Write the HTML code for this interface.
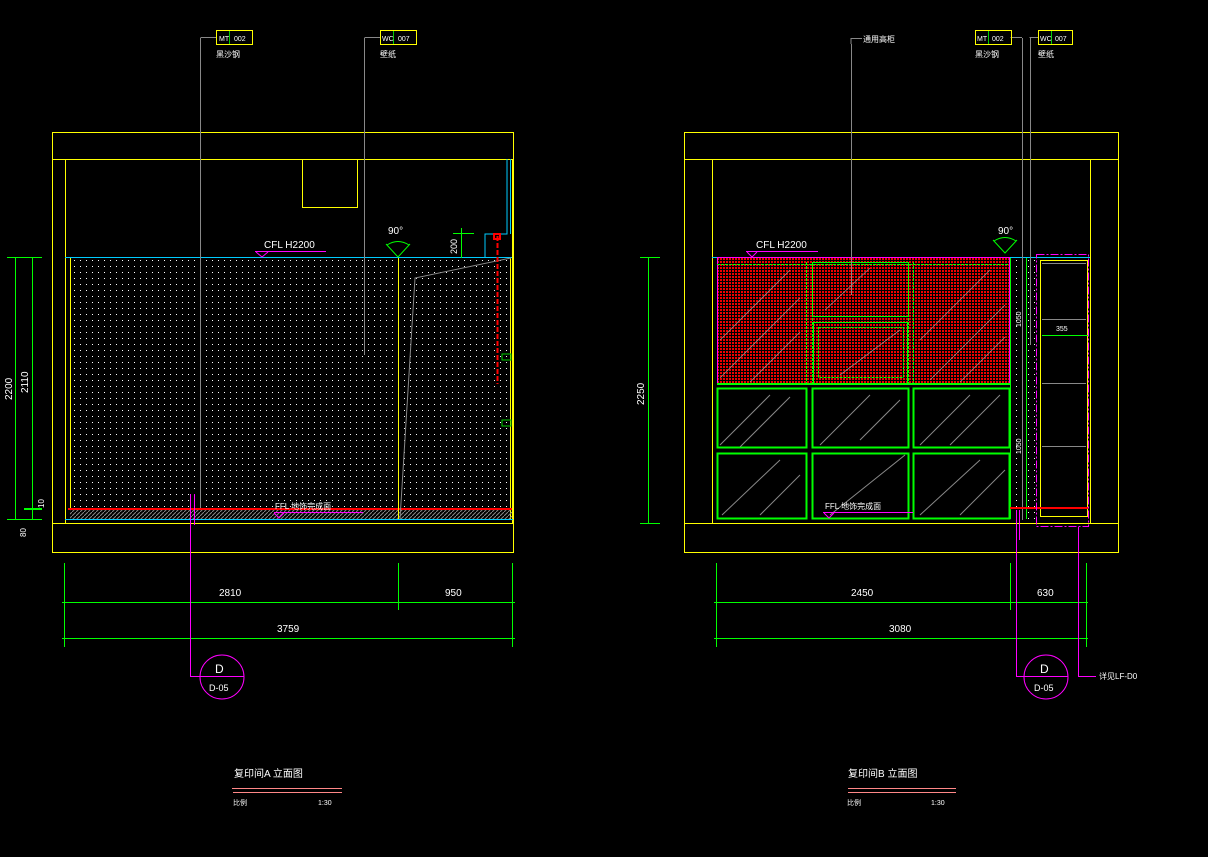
<!DOCTYPE html>
<html><head><meta charset="utf-8"><style>
html,body{margin:0;padding:0;background:#000;width:1208px;height:857px;overflow:hidden}
svg{display:block}
text{font-family:"Liberation Sans","Noto Sans CJK SC",sans-serif;fill:#fff}
</style></head><body>
<svg width="1208" height="857" viewBox="0 0 1208 857" xmlns="http://www.w3.org/2000/svg">
<defs>
<pattern id="dw" width="6" height="6" patternUnits="userSpaceOnUse"><rect x="2" y="2" width="1" height="1" fill="#fff"/></pattern>
<pattern id="dr" width="3" height="3" patternUnits="userSpaceOnUse"><rect width="3" height="3" fill="#000"/><rect x="0" y="0" width="2" height="2" fill="#e00"/></pattern>
<pattern id="hatch" width="4" height="4" patternUnits="userSpaceOnUse"><path d="M0 4L4 0" stroke="#888" stroke-width="1"/></pattern>
</defs>
<rect width="1208" height="857" fill="#000"/>

<!-- ========== LEFT ========== -->
<g fill="none" stroke-width="1">
<rect x="52.5" y="132.5" width="461" height="420" stroke="#ff0"/>
<line x1="52" y1="159.5" x2="513" y2="159.5" stroke="#ff0"/>
<line x1="52" y1="523.5" x2="513" y2="523.5" stroke="#ff0"/>
<line x1="65.5" y1="159" x2="65.5" y2="523" stroke="#ff0"/>
<line x1="512.5" y1="159" x2="512.5" y2="523" stroke="#ff0"/>
<rect x="70" y="258" width="442" height="251" fill="url(#dw)" stroke="none"/>
<line x1="65" y1="257.5" x2="512" y2="257.5" stroke="#0cf"/>
<line x1="65" y1="519.5" x2="513" y2="519.5" stroke="#0cf"/>
<line x1="70.5" y1="258" x2="70.5" y2="509" stroke="#ff0"/>
<line x1="510.5" y1="258" x2="510.5" y2="519" stroke="#ff0"/>
<rect x="70" y="510" width="442" height="9" fill="url(#hatch)" stroke="none"/>
<line x1="68" y1="509" x2="512" y2="509" stroke="#f00" stroke-width="2"/>
<rect x="302.5" y="159.5" width="55" height="48" stroke="#ff0"/>
<polyline points="485,257 485,234 507,234 507,159" stroke="#0cf"/>
<line x1="510.5" y1="159" x2="510.5" y2="234" stroke="#0cf"/>
<line x1="200.5" y1="38" x2="200.5" y2="508" stroke="#888"/>
<line x1="364.5" y1="38" x2="364.5" y2="355" stroke="#888"/>
<line x1="398.5" y1="258" x2="398.5" y2="519" stroke="#ff0"/>
<polyline points="511,258 415,278 400,519" stroke="#888"/>
<line x1="497.5" y1="236" x2="497.5" y2="384" stroke="#f00" stroke-width="2" stroke-dasharray="5,2"/>
<rect x="494" y="234" width="6" height="5" stroke="#f00" stroke-width="2"/>
<rect x="502" y="354" width="9" height="6" stroke="#0c0"/>
<rect x="502" y="420" width="9" height="6" stroke="#0c0"/>
<line x1="255" y1="251.5" x2="326" y2="251.5" stroke="#f0f"/>
<polyline points="256,252 262,257 268,252" stroke="#f0f"/>
<line x1="274" y1="512.5" x2="363" y2="512.5" stroke="#f0f"/>
<polyline points="274,513 279,518 284,513" stroke="#f0f"/>
<path d="M387 245 Q398 238 409 245" stroke="#0f0"/>
<polyline points="386,244 398,257 410,244" stroke="#0f0"/>
<line x1="461.5" y1="228" x2="461.5" y2="258" stroke="#0f0"/>
<line x1="453" y1="233.5" x2="474" y2="233.5" stroke="#0f0"/>
<line x1="15.5" y1="257" x2="15.5" y2="520" stroke="#0f0"/>
<line x1="32.5" y1="257" x2="32.5" y2="520" stroke="#0f0"/>
<line x1="7" y1="257.5" x2="42" y2="257.5" stroke="#0f0"/>
<line x1="7" y1="519.5" x2="42" y2="519.5" stroke="#0f0"/>
<line x1="24" y1="509" x2="42" y2="509" stroke="#0f0" stroke-width="2"/>
<line x1="62" y1="602.5" x2="515" y2="602.5" stroke="#0f0"/>
<line x1="62" y1="638.5" x2="515" y2="638.5" stroke="#0f0"/>
<line x1="64.5" y1="563" x2="64.5" y2="647" stroke="#0f0"/>
<line x1="398.5" y1="563" x2="398.5" y2="610" stroke="#0f0"/>
<line x1="512.5" y1="563" x2="512.5" y2="647" stroke="#0f0"/>
<polyline points="190.5,494 190.5,676.5 244,676.5" stroke="#f0f"/>
<line x1="194.5" y1="494" x2="194.5" y2="525" stroke="#f0f"/>
<circle cx="222" cy="677" r="22" stroke="#f0f"/>
<polyline points="201,38 201,37.5 216,37.5" stroke="#888"/>
<rect x="216.5" y="30.5" width="36" height="14" stroke="#ff0"/>
<line x1="229.5" y1="31" x2="229.5" y2="44" stroke="#0c0"/>
<polyline points="365,38 365,37.5 380,37.5" stroke="#888"/>
<rect x="380.5" y="30.5" width="36" height="14" stroke="#ff0"/>
<line x1="393.5" y1="31" x2="393.5" y2="44" stroke="#0c0"/>
<line x1="232" y1="788.5" x2="342" y2="788.5" stroke="#f88"/>
<line x1="233" y1="792.5" x2="342" y2="792.5" stroke="#f88"/>
</g>
<g font-size="9">
<text x="219" y="41" font-size="7">MT</text><text x="234" y="41" font-size="7">002</text>
<text x="216" y="57" font-size="8">黑沙钢</text>
<text x="382" y="41" font-size="7">WC</text><text x="398" y="41" font-size="7">007</text>
<text x="380" y="57" font-size="8">壁纸</text>
<text x="264" y="248" font-size="10">CFL H2200</text>
<text x="275" y="509" font-size="8">FFL 地饰完成面</text>
<text x="388" y="234" font-size="10">90°</text>
<text x="457" y="254" font-size="9" transform="rotate(-90 457 254)">200</text>
<text x="12" y="400" font-size="10" transform="rotate(-90 12 400)">2200</text>
<text x="28" y="393" font-size="10" transform="rotate(-90 28 393)">2110</text>
<text x="44" y="508" font-size="8" transform="rotate(-90 44 508)">10</text>
<text x="26" y="537" font-size="8" transform="rotate(-90 26 537)">80</text>
<text x="219" y="596" font-size="10">2810</text>
<text x="445" y="596" font-size="10">950</text>
<text x="277" y="632" font-size="10">3759</text>
<text x="215" y="673" font-size="12">D</text>
<text x="209" y="691" font-size="9">D-05</text>
<text x="234" y="777" font-size="10">复印间A 立面图</text>
<text x="233" y="805" font-size="7">比例</text>
<text x="318" y="805" font-size="7">1:30</text>
</g>

<!-- ========== RIGHT ========== -->
<g fill="none" stroke-width="1">
<rect x="684.5" y="132.5" width="434" height="420" stroke="#ff0"/>
<line x1="684" y1="159.5" x2="1118" y2="159.5" stroke="#ff0"/>
<line x1="684" y1="523.5" x2="1118" y2="523.5" stroke="#ff0"/>
<line x1="712.5" y1="159" x2="712.5" y2="523" stroke="#ff0"/>
<line x1="1090.5" y1="159" x2="1090.5" y2="523" stroke="#ff0"/>
<line x1="712" y1="257.5" x2="1090" y2="257.5" stroke="#0cf"/>
<rect x="717" y="258" width="293" height="125" fill="url(#dr)" stroke="none"/>
<g stroke="#aaa" stroke-width="0.8" opacity="0.8">
<line x1="720" y1="340" x2="790" y2="270"/><line x1="720" y1="378" x2="800" y2="298"/>
<line x1="750" y1="382" x2="800" y2="332"/>
<line x1="825" y1="310" x2="870" y2="268"/><line x1="840" y1="375" x2="900" y2="330"/>
<line x1="920" y1="340" x2="990" y2="270"/><line x1="930" y1="380" x2="1005" y2="305"/>
<line x1="960" y1="382" x2="1005" y2="337"/>
</g>
<rect x="717.5" y="257.5" width="292" height="126" stroke="#f0f"/>
<g stroke="#0f0">
<line x1="717" y1="264.5" x2="1008" y2="264.5" stroke-dasharray="3,1"/>
<line x1="717" y1="384" x2="1010" y2="384" stroke-width="2"/>
<line x1="806.5" y1="262" x2="806.5" y2="383" stroke-dasharray="3,1"/>
<line x1="812.5" y1="262" x2="812.5" y2="383" stroke-dasharray="3,1"/>
<line x1="908.5" y1="262" x2="908.5" y2="383" stroke-dasharray="3,1"/>
<line x1="913.5" y1="262" x2="913.5" y2="383" stroke-dasharray="3,1"/>
<rect x="812.5" y="262.5" width="96" height="54"/>
<rect x="813.5" y="322.5" width="94" height="61"/>
<rect x="818.5" y="327.5" width="85" height="50" stroke-dasharray="3,1"/>
<rect x="717.5" y="388.5" width="89" height="59" stroke-width="2"/>
<rect x="812.5" y="388.5" width="96" height="59" stroke-width="2"/>
<rect x="913.5" y="388.5" width="96" height="59" stroke-width="2"/>
<rect x="717.5" y="453.5" width="89" height="65" stroke-width="2"/>
<rect x="812.5" y="453.5" width="96" height="65" stroke-width="2"/>
<rect x="913.5" y="453.5" width="96" height="65" stroke-width="2"/>
<line x1="1026.5" y1="258" x2="1026.5" y2="519"/>
</g>
<g stroke="#888">
<line x1="720" y1="445" x2="770" y2="395"/><line x1="740" y1="447" x2="790" y2="397"/>
<line x1="820" y1="445" x2="870" y2="395"/><line x1="860" y1="440" x2="900" y2="400"/>
<line x1="920" y1="445" x2="970" y2="395"/><line x1="950" y1="445" x2="1000" y2="395"/>
<line x1="722" y1="515" x2="780" y2="460"/><line x1="760" y1="515" x2="800" y2="475"/>
<line x1="830" y1="515" x2="905" y2="455"/><line x1="920" y1="515" x2="980" y2="460"/>
<line x1="960" y1="515" x2="1005" y2="470"/>
</g>
<rect x="1010" y="258" width="26" height="261" fill="url(#dw)" stroke="none"/>
<line x1="1010.5" y1="258" x2="1010.5" y2="519" stroke="#0f0"/>
<line x1="1030.5" y1="38" x2="1030.5" y2="345" stroke="#888"/>
<line x1="1022.5" y1="38" x2="1022.5" y2="520" stroke="#888"/>
<rect x="1040.5" y="260.5" width="47" height="256" stroke="#ff0"/>
<g stroke="#888">
<line x1="1042" y1="263.5" x2="1086" y2="263.5"/>
<line x1="1042" y1="319.5" x2="1086" y2="319.5"/>
<line x1="1042" y1="383.5" x2="1086" y2="383.5"/>
<line x1="1042" y1="446.5" x2="1086" y2="446.5"/>
</g>
<line x1="1042" y1="335.5" x2="1088" y2="335.5" stroke="#0f0"/>
<line x1="1010" y1="508" x2="1088" y2="508" stroke="#f00" stroke-width="2"/>
<rect x="1036.5" y="254.5" width="52" height="272" stroke="#f0f" stroke-dasharray="8,2,2,2"/>
<line x1="746" y1="251.5" x2="818" y2="251.5" stroke="#f0f"/>
<polyline points="747,252 752,257 757,252" stroke="#f0f"/>
<line x1="823" y1="512.5" x2="913" y2="512.5" stroke="#f0f"/>
<polyline points="824,513 829,518 834,513" stroke="#f0f"/>
<path d="M994 241 Q1005 234 1016 241" stroke="#0f0"/>
<polyline points="993,240 1005,253 1017,240" stroke="#0f0"/>
<line x1="851.5" y1="44" x2="851.5" y2="295" stroke="#888"/>
<polyline points="851,44 851,38.5 862,38.5" stroke="#888"/>
<line x1="648.5" y1="257" x2="648.5" y2="524" stroke="#0f0"/>
<line x1="640" y1="257.5" x2="660" y2="257.5" stroke="#0f0"/>
<line x1="640" y1="523.5" x2="660" y2="523.5" stroke="#0f0"/>
<line x1="714" y1="602.5" x2="1088" y2="602.5" stroke="#0f0"/>
<line x1="714" y1="638.5" x2="1088" y2="638.5" stroke="#0f0"/>
<line x1="716.5" y1="563" x2="716.5" y2="647" stroke="#0f0"/>
<line x1="1010.5" y1="563" x2="1010.5" y2="610" stroke="#0f0"/>
<line x1="1086.5" y1="563" x2="1086.5" y2="647" stroke="#0f0"/>
<polyline points="1016.5,510 1016.5,676.5 1068,676.5" stroke="#f0f"/>
<line x1="1019.5" y1="510" x2="1019.5" y2="540" stroke="#f0f"/>
<polyline points="1078.5,527 1078.5,676.5 1096,676.5" stroke="#f0f"/>
<circle cx="1046" cy="677" r="22" stroke="#f0f"/>
<polyline points="1011,38 1011,37.5 1022,37.5" stroke="#888"/>
<rect x="975.5" y="30.5" width="36" height="14" stroke="#ff0"/>
<line x1="988.5" y1="31" x2="988.5" y2="44" stroke="#0c0"/>
<polyline points="1030,38 1030,37.5 1038,37.5" stroke="#888"/>
<rect x="1038.5" y="30.5" width="34" height="14" stroke="#ff0"/>
<line x1="1051.5" y1="31" x2="1051.5" y2="44" stroke="#0c0"/>
<line x1="848" y1="788.5" x2="956" y2="788.5" stroke="#f88"/>
<line x1="848" y1="792.5" x2="956" y2="792.5" stroke="#f88"/>
</g>
<g>
<text x="977" y="41" font-size="7">MT</text><text x="992" y="41" font-size="7">002</text>
<text x="975" y="57" font-size="8">黑沙钢</text>
<text x="1040" y="41" font-size="7">WC</text><text x="1055" y="41" font-size="7">007</text>
<text x="1038" y="57" font-size="8">壁纸</text>
<text x="863" y="42" font-size="8">通用高柜</text>
<text x="756" y="248" font-size="10">CFL H2200</text>
<text x="825" y="509" font-size="8">FFL 地饰完成面</text>
<text x="998" y="234" font-size="10">90°</text>
<text x="1056" y="331" font-size="7">355</text>
<text x="1021" y="327" font-size="7" transform="rotate(-90 1021 327)">1050</text>
<text x="1021" y="454" font-size="7" transform="rotate(-90 1021 454)">1050</text>
<text x="644" y="405" font-size="10" transform="rotate(-90 644 405)">2250</text>
<text x="851" y="596" font-size="10">2450</text>
<text x="1037" y="596" font-size="10">630</text>
<text x="889" y="632" font-size="10">3080</text>
<text x="1040" y="673" font-size="12">D</text>
<text x="1034" y="691" font-size="9">D-05</text>
<text x="1099" y="679" font-size="8">详见LF-D0</text>
<text x="848" y="777" font-size="10">复印间B 立面图</text>
<text x="847" y="805" font-size="7">比例</text>
<text x="931" y="805" font-size="7">1:30</text>
</g>
</svg>
</body></html>
